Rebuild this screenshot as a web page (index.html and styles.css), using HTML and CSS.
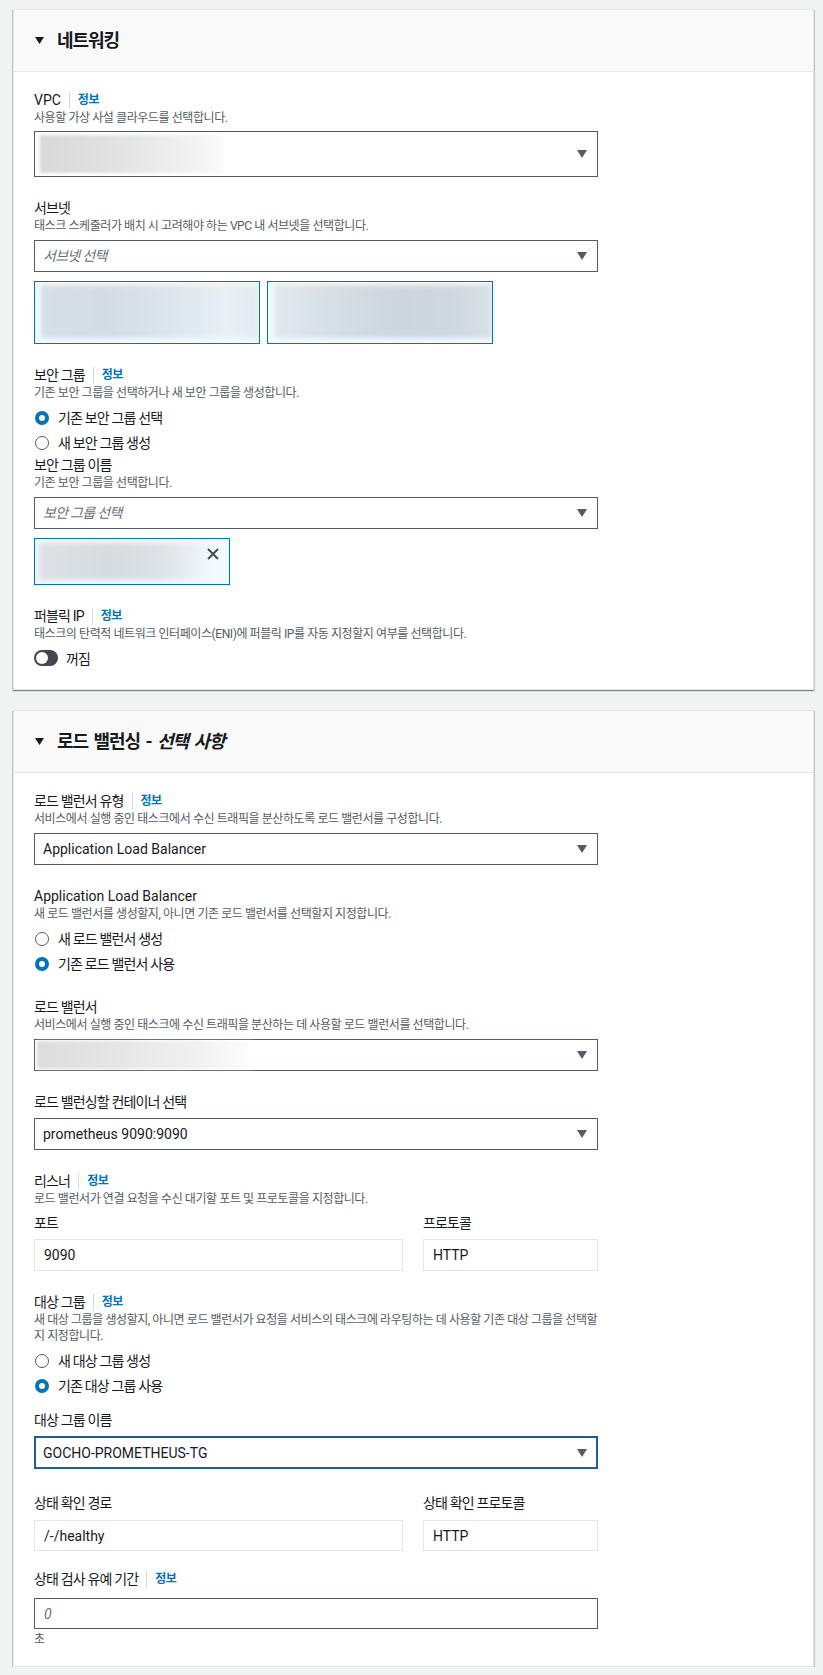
FILE: index.html
```html
<!DOCTYPE html>
<html lang="ko">
<head>
<meta charset="utf-8">
<title>네트워킹</title>
<link rel="stylesheet" href="styles.css">
</head>
<body>
<div class="page">

  <section class="card">
    <div class="card-header">
      <svg class="caret" width="9" height="7" viewBox="0 0 9 7"><path d="M0 0H9L4.5 7Z"/></svg>
      <h2 class="title">네트워킹</h2>
    </div>
    <div class="card-body">

      <div class="field">
        <div class="label-row"><span class="label latin">VPC</span><span class="sep"></span><a class="info">정보</a></div>
        <div class="desc">사용할 가상 사설 클라우드를 선택합니다.</div>
        <div class="select tall">
          <div class="redact redact-vpc"></div>
          <svg class="arrow" width="10" height="8" viewBox="0 0 10 8"><path d="M0 0H10L5 8Z"/></svg>
        </div>
      </div>

      <div class="field">
        <div class="label-row"><span class="label">서브넷</span></div>
        <div class="desc">태스크 스케줄러가 배치 시 고려해야 하는 VPC 내 서브넷을 선택합니다.</div>
        <div class="select">
          <span class="placeholder">서브넷 선택</span>
          <svg class="arrow" width="10" height="8" viewBox="0 0 10 8"><path d="M0 0H10L5 8Z"/></svg>
        </div>
        <div class="chips">
          <div class="chip chip-subnet"><div class="redact redact-subnet1"></div></div>
          <div class="chip chip-subnet"><div class="redact redact-subnet2"></div></div>
        </div>
      </div>

      <div class="field">
        <div class="label-row"><span class="label">보안 그룹</span><span class="sep"></span><a class="info">정보</a></div>
        <div class="desc">기존 보안 그룹을 선택하거나 새 보안 그룹을 생성합니다.</div>
        <div class="radios">
          <div class="radio"><span class="dot checked"></span><span class="radio-text">기존 보안 그룹 선택</span></div>
          <div class="radio"><span class="dot"></span><span class="radio-text">새 보안 그룹 생성</span></div>
        </div>
        <div class="subfield">
          <div class="label-row"><span class="label">보안 그룹 이름</span></div>
          <div class="desc">기존 보안 그룹을 선택합니다.</div>
          <div class="select">
            <span class="placeholder">보안 그룹 선택</span>
            <svg class="arrow" width="10" height="8" viewBox="0 0 10 8"><path d="M0 0H10L5 8Z"/></svg>
          </div>
          <div class="chip chip-sg">
            <div class="redact redact-sg"></div>
            <svg class="close" width="12" height="12" viewBox="0 0 12 12"><path d="M1 1L11 11M11 1L1 11"/></svg>
          </div>
        </div>
      </div>

      <div class="field">
        <div class="label-row"><span class="label">퍼블릭 IP</span><span class="sep"></span><a class="info">정보</a></div>
        <div class="desc">태스크의 탄력적 네트워크 인터페이스(ENI)에 퍼블릭 IP를 자동 지정할지 여부를 선택합니다.</div>
        <div class="toggle-row"><span class="toggle"><span class="knob"></span></span><span class="toggle-text">꺼짐</span></div>
      </div>

    </div>
  </section>

  <section class="card">
    <div class="card-header">
      <svg class="caret" width="9" height="7" viewBox="0 0 9 7"><path d="M0 0H9L4.5 7Z"/></svg>
      <h2 class="title">로드 밸런싱 - <em>선택 사항</em></h2>
    </div>
    <div class="card-body">

      <div class="field">
        <div class="label-row"><span class="label">로드 밸런서 유형</span><span class="sep"></span><a class="info">정보</a></div>
        <div class="desc">서비스에서 실행 중인 태스크에서 수신 트래픽을 분산하도록 로드 밸런서를 구성합니다.</div>
        <div class="select">
          <span class="value">Application Load Balancer</span>
          <svg class="arrow" width="10" height="8" viewBox="0 0 10 8"><path d="M0 0H10L5 8Z"/></svg>
        </div>
      </div>

      <div class="field">
        <div class="label-row"><span class="label latin">Application Load Balancer</span></div>
        <div class="desc">새 로드 밸런서를 생성할지, 아니면 기존 로드 밸런서를 선택할지 지정합니다.</div>
        <div class="radios">
          <div class="radio"><span class="dot"></span><span class="radio-text">새 로드 밸런서 생성</span></div>
          <div class="radio"><span class="dot checked"></span><span class="radio-text">기존 로드 밸런서 사용</span></div>
        </div>
      </div>

      <div class="field">
        <div class="label-row"><span class="label">로드 밸런서</span></div>
        <div class="desc">서비스에서 실행 중인 태스크에 수신 트래픽을 분산하는 데 사용할 로드 밸런서를 선택합니다.</div>
        <div class="select">
          <div class="redact redact-lb"></div>
          <svg class="arrow" width="10" height="8" viewBox="0 0 10 8"><path d="M0 0H10L5 8Z"/></svg>
        </div>
      </div>

      <div class="field">
        <div class="label-row"><span class="label">로드 밸런싱할 컨테이너 선택</span></div>
        <div class="select nodesc">
          <span class="value">prometheus 9090:9090</span>
          <svg class="arrow" width="10" height="8" viewBox="0 0 10 8"><path d="M0 0H10L5 8Z"/></svg>
        </div>
      </div>

      <div class="field">
        <div class="label-row"><span class="label">리스너</span><span class="sep"></span><a class="info">정보</a></div>
        <div class="desc">로드 밸런서가 연결 요청을 수신 대기할 포트 및 프로토콜을 지정합니다.</div>
        <div class="pair">
          <div class="pair-col">
            <div class="sublabel">포트</div>
            <div class="input readonly">9090</div>
          </div>
          <div class="pair-col">
            <div class="sublabel">프로토콜</div>
            <div class="input readonly">HTTP</div>
          </div>
        </div>
      </div>

      <div class="field">
        <div class="label-row"><span class="label">대상 그룹</span><span class="sep"></span><a class="info">정보</a></div>
        <div class="desc wrap">새 대상 그룹을 생성할지, 아니면 로드 밸런서가 요청을 서비스의 태스크에 라우팅하는 데 사용할 기존 대상 그룹을 선택할지 지정합니다.</div>
        <div class="radios">
          <div class="radio"><span class="dot"></span><span class="radio-text">새 대상 그룹 생성</span></div>
          <div class="radio"><span class="dot checked"></span><span class="radio-text">기존 대상 그룹 사용</span></div>
        </div>
      </div>

      <div class="field field-tight">
        <div class="label-row"><span class="label">대상 그룹 이름</span></div>
        <div class="select focused nodesc">
          <span class="value">GOCHO-PROMETHEUS-TG</span>
          <svg class="arrow" width="10" height="8" viewBox="0 0 10 8"><path d="M0 0H10L5 8Z"/></svg>
        </div>
      </div>

      <div class="field field-loose">
        <div class="pair pair-top">
          <div class="pair-col">
            <div class="label-row"><span class="label">상태 확인 경로</span></div>
            <div class="input readonly spaced">/-/healthy</div>
          </div>
          <div class="pair-col">
            <div class="label-row"><span class="label">상태 확인 프로토콜</span></div>
            <div class="input readonly spaced">HTTP</div>
          </div>
        </div>
      </div>

      <div class="field field-short">
        <div class="label-row"><span class="label">상태 검사 유예 기간</span><span class="sep"></span><a class="info">정보</a></div>
        <div class="input editable"><span class="placeholder">0</span></div>
        <div class="hint">초</div>
      </div>

    </div>
  </section>

</div>
</body>
</html>
```

FILE: styles.css
```css
* { box-sizing: border-box; }

html, body {
  margin: 0;
  padding: 0;
  background: #f2f3f3;
}

body {
  font-family: Roboto, "Noto Sans CJK KR", "Noto Sans", sans-serif;
  color: #16191f;
  font-size: 14px;
}

.page {
  padding: 9px 9px 0 13px;
  display: flex;
  flex-direction: column;
  gap: 20px;
}

.card {
  background: #fff;
  border: 1px solid #e4e7e7;
  box-shadow: 0 1px 1px 0 rgba(0, 28, 36, 0.3), 1px 1px 1px 0 rgba(0, 28, 36, 0.15), -1px 1px 1px 0 rgba(0, 28, 36, 0.15);
}

.card-header {
  height: 62px;
  background: #f9f9f9;
  border-bottom: 1px solid #e5e7e7;
  display: flex;
  align-items: center;
  padding: 0 21px;
  gap: 13px;
}

.caret path { fill: #16191f; }

.title {
  margin: 0;
  font-size: 18px;
  font-weight: 700;
  letter-spacing: -0.06em;
  line-height: 24px;
  word-spacing: 0.12em;
}

.title em {
  font-style: italic;
}

.card-body {
  padding: 18px 20px 19px 20px;
  display: flex;
  flex-direction: column;
}

.field + .field { margin-top: 21px; }
.field.field-tight { margin-top: 12px; }
.field.field-loose { margin-top: 24px; }
.field.field-short { margin-top: 18px; }

.label-row {
  display: flex;
  align-items: center;
  height: 20px;
}

.label {
  font-size: 14px;
  font-weight: 400;
  line-height: 20px;
  letter-spacing: -0.06em;
}

.label.latin { letter-spacing: 0; }

.sep {
  width: 1px;
  height: 17px;
  background: #d5dbdb;
  margin: 0 8px 0 8px;
}

.info {
  color: #0073bb;
  font-size: 12px;
  font-weight: 700;
  letter-spacing: -0.04em;
  line-height: 20px;
}

.desc {
  font-size: 12px;
  line-height: 16px;
  color: #545b64;
  letter-spacing: -0.035em;
  max-width: 564px;
}

.select {
  margin-top: 6px;
  width: 564px;
  height: 32px;
  border: 1px solid #545b64;
  background: #fff;
  display: flex;
  align-items: center;
  padding: 0 10px 0 8px;
}

.select.tall {
  height: 46px;
  margin-top: 5px;
  padding-left: 5px;
}

.select.nodesc { margin-top: 6px; }

.select.focused {
  border: 2px solid #1d5f99;
  padding-left: 7px;
  padding-right: 9px;
  height: 33px;
}

.select .arrow {
  margin-left: auto;
  flex: none;
}

.arrow path { fill: #545b64; }

.value {
  font-size: 14px;
  color: #16191f;
  line-height: 20px;
}

.placeholder {
  font-size: 14px;
  font-style: italic;
  color: #687078;
  letter-spacing: -0.05em;
  line-height: 20px;
}

.redact {
  flex: none;
}

.redact-vpc {
  width: 184px;
  height: 38px;
  background: linear-gradient(90deg, #d8d8d8 0%, #e0e0e0 35%, #e9e9e9 60%, #f3f3f3 85%, #fbfbfb 100%);
  filter: blur(1.5px);
}

.redact-lb {
  width: 215px;
  height: 28px;
  margin-left: -6px;
  background: linear-gradient(90deg, #dcdcdc 0%, #e6e6e6 40%, #efefef 70%, #fafafa 95%, #ffffff 100%);
  filter: blur(1.5px);
}

.chips {
  display: flex;
  gap: 7px;
  margin-top: 9px;
}

.chip {
  border: 1px solid #0073bb;
  background: #f1faff;
  display: flex;
  overflow: hidden;
}

.chip-subnet {
  width: 226px;
  height: 63px;
  padding: 3px 0 5px 6px;
}

.redact-subnet1 {
  width: 100%;
  height: 100%;
  background: linear-gradient(90deg, #d6dfe8 0%, #d3dce5 30%, #dde6ee 60%, #e8eff5 85%, #e3eaf1 100%);
  filter: blur(2px);
}

.redact-subnet2 {
  width: 100%;
  height: 100%;
  margin-right: 6px;
  background: linear-gradient(90deg, #e2e9ef 0%, #d3dbe3 35%, #cdd6df 60%, #d0d8e1 85%, #d8e0e8 100%);
  filter: blur(2px);
}

.chip-sg {
  width: 196px;
  height: 47px;
  margin-top: 9px;
  padding: 4px 0 4px 4px;
  align-items: flex-start;
}

.redact-sg {
  width: 172px;
  height: 100%;
  margin-right: -156px;
  background: linear-gradient(90deg, #dde1e5 0%, #d6dbe0 40%, #dde2e7 70%, #eaf0f5 90%, rgba(241, 250, 255, 0) 100%);
  filter: blur(2px);
}

.close {
  margin: 5px 10px 0 auto;
  position: relative;
  flex: none;
}

.close path {
  stroke: #414750;
  stroke-width: 1.8;
  fill: none;
}

.radios {
  margin-top: 4px;
  display: flex;
  flex-direction: column;
}

.radio {
  height: 25px;
  display: flex;
  align-items: center;
  gap: 9px;
}

.dot {
  width: 14px;
  height: 14px;
  border-radius: 50%;
  border: 1.5px solid #545b64;
  background: #fff;
  flex: none;
  margin-left: 1px;
}

.dot.checked {
  border: 4.5px solid #0073bb;
}

.radio-text {
  font-size: 14px;
  font-weight: 400;
  letter-spacing: -0.06em;
  line-height: 20px;
}

.subfield {
  display: flex;
  flex-direction: column;
}

.toggle-row {
  margin-top: 4px;
  height: 24px;
  display: flex;
  align-items: center;
  gap: 8px;
}

.toggle {
  width: 24px;
  height: 16px;
  border-radius: 8px;
  background: #414750;
  display: flex;
  align-items: center;
  padding-left: 2px;
}

.knob {
  width: 12px;
  height: 12px;
  border-radius: 50%;
  background: #fff;
}

.toggle-text {
  font-size: 14px;
  letter-spacing: -0.06em;
}

.pair {
  width: 564px;
  display: grid;
  grid-template-columns: 369fr 175fr;
  column-gap: 20px;
  margin-top: 6px;
}

.pair.pair-top { margin-top: 0; }

.pair-col {
  display: flex;
  flex-direction: column;
}

.sublabel {
  font-size: 14px;
  line-height: 20px;
  letter-spacing: -0.06em;
  font-weight: 400;
}

.input {
  height: 32px;
  margin-top: 6px;
  display: flex;
  align-items: center;
  padding: 0 9px;
  font-size: 14px;
  background: #fff;
}

.input.spaced { margin-top: 7px; height: 31px; }

.input.readonly {
  border: 1px solid #e3e6e6;
}

.input.editable {
  width: 564px;
  border: 1px solid #545b64;
  margin-top: 9px;
  height: 31px;
}

.hint {
  margin-top: 2px;
  font-size: 12px;
  line-height: 16px;
  color: #545b64;
}
```
